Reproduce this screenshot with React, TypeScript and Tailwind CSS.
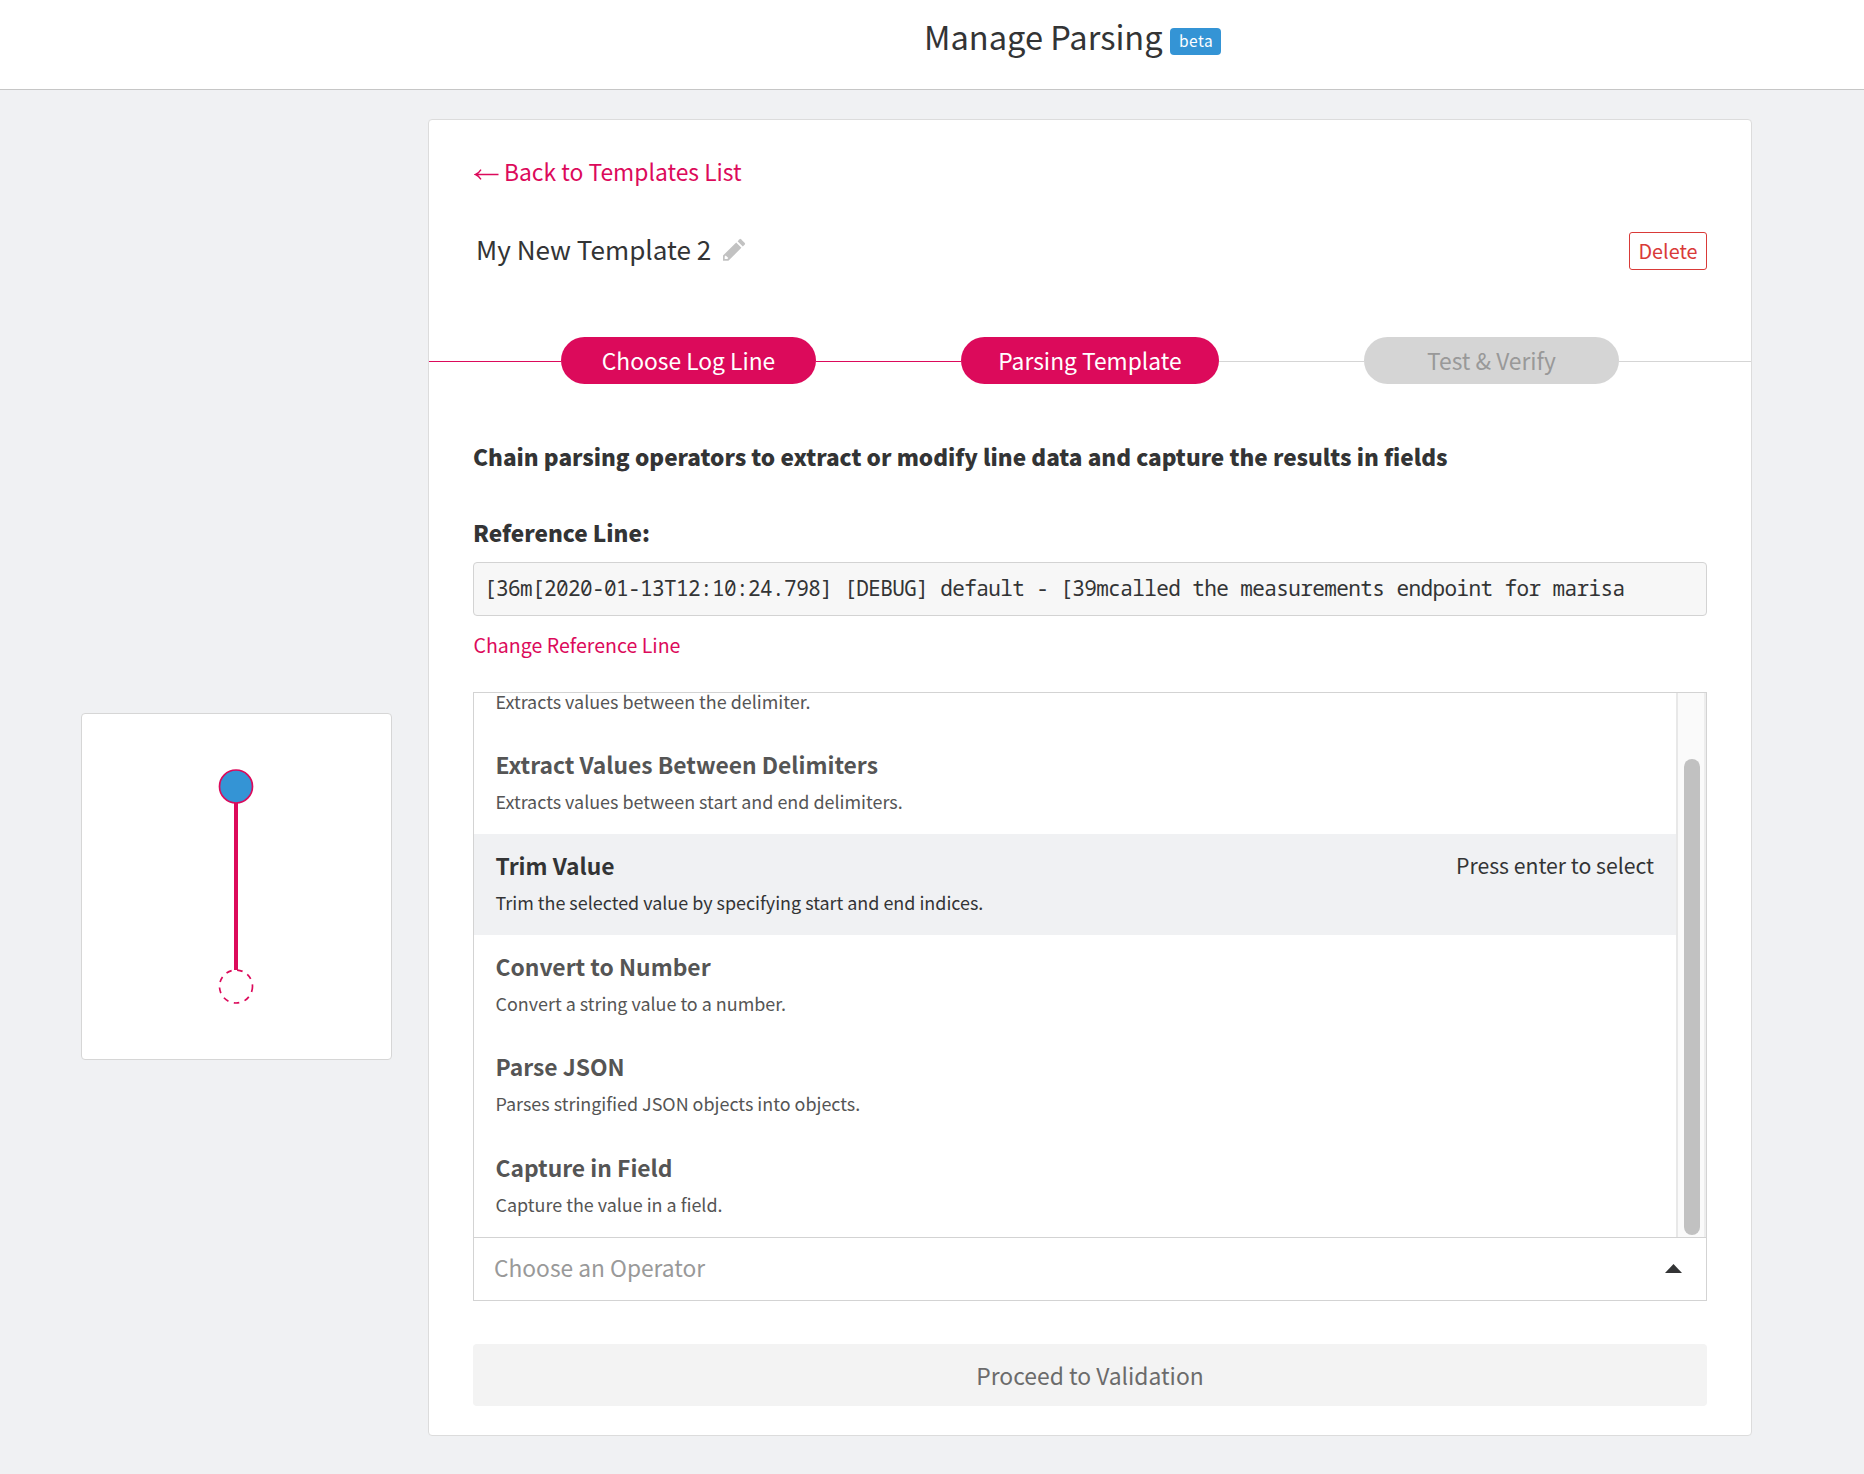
type Operator = { name: string; description: string; active?: boolean };

const operators: Operator[] = [
  { name: "Extract Values Between Delimiters", description: "Extracts values between start and end delimiters." },
  { name: "Trim Value", description: "Trim the selected value by specifying start and end indices.", active: true },
  { name: "Convert to Number", description: "Convert a string value to a number." },
  { name: "Parse JSON", description: "Parses stringified JSON objects into objects." },
  { name: "Capture in Field", description: "Capture the value in a field." },
];

function Header() {
  return (
    <header className="flex h-[90px] shrink-0 items-start border-b border-[#c6c6c6] bg-white pl-[924px]">
      <h1 className="text-[32.6px] leading-[71px]">Manage Parsing</h1>
      <span className="mt-7 ml-[7px] flex h-[27px] w-[51px] items-center justify-center rounded-[4px] bg-[#3494d5] text-[15.5px] leading-[25px] tracking-[0.5px] text-white">
        <span className="h-[27px] pl-[2px]">beta</span>
      </span>
    </header>
  );
}

function PipelineGraph() {
  return (
    <div className="mt-[623px] ml-[81px] h-[347px] w-[311px] shrink-0 rounded-[4px] border border-[#d6d6d6] bg-white">
      <svg width="309" height="345" viewBox="0 0 309 345" fill="none" stroke="#dc0a5b">
        <line x1="154" y1="89" x2="154" y2="256" strokeWidth="4" />
        <circle cx="154" cy="72.5" r="16.5" fill="#3494d5" strokeWidth="1.7" />
        <circle cx="154" cy="272.5" r="16.5" fill="#fff" strokeWidth="1.7" strokeDasharray="5.6 5.6" />
      </svg>
    </div>
  );
}

function TemplateTitle() {
  return (
    <div className="mt-[41px] flex h-[38px] items-start justify-between px-11">
      <div className="flex items-start pl-[3px]">
        <h2 className="text-[26.1px] leading-[35px]">My New Template 2</h2>
        <svg className="mt-[6px] ml-[11px]" width="24" height="24" viewBox="0 0 24 24" fill="#c2c2c2">
          <path
            fillRule="evenodd"
            d="M1 17.6 14.2 4.6l5.2 5.2L6.4 22.8H1zM2.7 18.6v2.5h2.6l1-1-2.6-2.6z"
          />
          <path d="m15.6 3.2 2-2a1 1 0 0 1 1.4 0l3.8 3.8a1 1 0 0 1 0 1.4l-2 2z" />
        </svg>
      </div>
      <button className="flex h-[38px] w-[78px] items-center justify-center rounded-[3px] border border-[#d93a38] text-[19.8px] leading-9 text-[#d93a38]">
        Delete
      </button>
    </div>
  );
}

function Steps() {
  return (
    <div className="mt-[67px] flex h-[47px] items-center text-[22.8px] leading-[47px] text-white">
      <div className="mt-[2px] h-px w-[132px] bg-[#dc0a5b]" />
      <div className="h-[47px] w-[255px] rounded-full bg-[#dc0a5b] text-center">Choose Log Line</div>
      <div className="mt-[2px] h-px w-[145px] bg-[#dc0a5b]" />
      <div className="h-[47px] w-[258px] rounded-full bg-[#dc0a5b] text-center">Parsing Template</div>
      <div className="mt-[2px] h-px w-[145px] bg-[#d5d5d5]" />
      <div className="h-[47px] w-[255px] rounded-full bg-[#d5d5d5] text-center text-[#999]">Test &amp; Verify</div>
      <div className="mt-[2px] h-px flex-1 bg-[#d5d5d5]" />
    </div>
  );
}

function OperatorOption({ name, description, active }: Operator) {
  return (
    <li
      className={
        active
          ? "flex h-[100.75px] shrink-0 items-start justify-between bg-[#f0f1f3] pr-[22px] pl-[21.5px] text-[#333435]"
          : "flex h-[100.75px] shrink-0 items-start justify-between pr-[22px] pl-[21.5px] text-[#555]"
      }
    >
      <div>
        <p className="mt-[13.75px] text-[22.83px] leading-9 font-bold">{name}</p>
        <p className="mt-[3.15px] text-[17.93px] leading-[30px]">{description}</p>
      </div>
      {active && <span className="mt-[13px] text-[21.2px] leading-9">Press enter to select</span>}
    </li>
  );
}

function OperatorSelect() {
  return (
    <div className="mt-8 h-[609px] border border-[#d3d3d3]">
      <div className="flex h-[544px]">
        <ul className="flex flex-1 flex-col justify-end">
          <li className="h-[40.25px] pl-[21.5px] text-[17.93px] leading-4 text-[#555]">
            Extracts values between the delimiter.
          </li>
          {operators.map((operator) => (
            <OperatorOption key={operator.name} {...operator} />
          ))}
        </ul>
        <div className="flex w-[30px] justify-center border-x-2 border-l-[#e8e8e8] border-r-[#ededed] bg-[#fafafa] pt-[66px] pl-[1px] pb-[2px]">
          <div className="w-4 rounded-full bg-[#c1c1c1]" />
        </div>
      </div>
      <div className="flex h-[63px] items-start justify-between border-t border-[#d3d3d3] pr-6 pl-5">
        <span className="text-[22.75px] leading-[60px] text-[#999]">Choose an Operator</span>
        <svg className="mt-[26px]" width="17" height="9" viewBox="0 0 17 9" fill="#333435">
          <path d="M8.5 0 17 9H0z" />
        </svg>
      </div>
    </div>
  );
}

export default function App() {
  return (
    <div className="flex h-[1474px] w-[1864px] flex-col overflow-hidden bg-[#f0f1f3] font-['Noto_Sans_CJK_SC',sans-serif] whitespace-nowrap text-[#333435]">
      <Header />
      <div className="flex flex-1 items-start">
        <PipelineGraph />
        <main className="mt-[29px] ml-9 h-[1317px] w-[1324px] shrink-0 rounded-[4px] border border-[#dcdcdc] bg-white">
          <a className="ml-[45px] flex items-start pt-[31px] text-[22.85px] leading-10 text-[#dc0a5b]">
            <svg className="mt-[17px] mr-[4px]" width="26" height="13" viewBox="0 0 26 13" fill="none" stroke="currentColor" strokeWidth="1.4">
              <path d="M1.500 6.500H24.500M7 1.600C5.500 4 4 5.600 1.500 6.500C4 7.400 5.500 9 7 11.400" />
            </svg>
            Back to Templates List
          </a>
          <TemplateTitle />
          <Steps />
          <div className="px-11">
            <p className="mt-[58px] text-[22.57px] leading-[30px] font-black">
              Chain parsing operators to extract or modify line data and capture the results in fields
            </p>
            <p className="mt-[46px] text-[22.6px] leading-[30px] font-black">Reference Line:</p>
            <pre className="mt-[14px] h-[54px] rounded-[4px] border border-[#d3d3d3] bg-[#f7f7f7] pl-[10px] font-['Noto_Sans_Mono',monospace] text-[21px] leading-[51px] tracking-[-0.595px]">
              [36m[2020-01-13T12:10:24.798] [DEBUG] default - [39mcalled the measurements endpoint for marisa
            </pre>
            <a className="mt-[14px] block pl-[0.5px] text-[19.57px] leading-[30px] text-[#dc0a5b]">Change Reference Line</a>
            <OperatorSelect />
            <button className="mt-[43px] block h-[62px] w-full rounded-[4px] bg-[#f3f3f3] text-center text-[22.85px] leading-[62px] text-[#6b6b6b]">
              Proceed to Validation
            </button>
          </div>
        </main>
      </div>
    </div>
  );
}
